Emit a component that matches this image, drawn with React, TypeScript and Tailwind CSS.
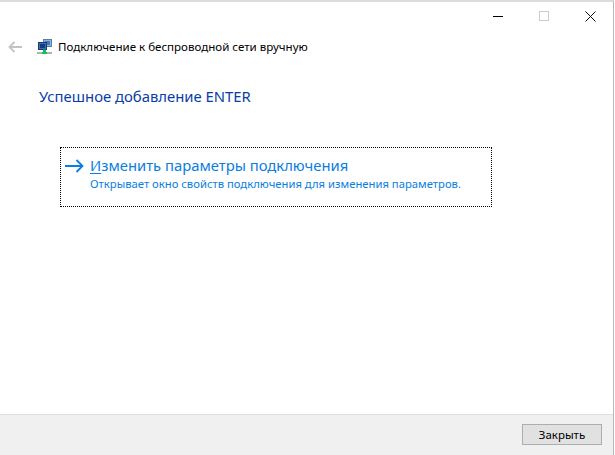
import React from 'react'

const segoe = "font-['Noto_Sans',sans-serif]"

const NetworkIcon: React.FC = () => (
    <svg width="16" height="16" viewBox="0 0 16 16" className="shrink-0">
        <rect x="6.5" y="0.5" width="8" height="7" fill="#8fb4dc" stroke="#5d7ba6" />
        <rect x="8" y="2" width="5" height="4" fill="#3f79c4" />
        <rect x="1.5" y="3.5" width="8" height="7" fill="#2f6fc4" stroke="#22385f" />
        <rect x="3" y="5" width="5" height="4" fill="#123a86" />
        <rect x="6" y="10.5" width="3" height="3" fill="#19b964" />
        <rect x="0" y="13" width="15" height="2" fill="#a8b8a8" />
        <rect x="5" y="13" width="5" height="2" fill="#19b964" />
    </svg>
)

const BackArrow: React.FC = () => (
    <svg width="14" height="12" viewBox="0 0 14 12" fill="none" stroke="#c4c4c4" strokeWidth="1.8" className="shrink-0">
        <path d="M14 6H1.5M6.5 1 1.5 6l5 5" />
    </svg>
)

const LinkArrow: React.FC = () => (
    <svg width="19" height="14" viewBox="0 0 19 14" fill="none" stroke="#0a7ee0" strokeWidth="1.8" className="shrink-0">
        <path d="M0 7H17.5M11.5 1l6 6-6 6" />
    </svg>
)

export default function App() {
    return (
        <div className={`flex h-[455px] w-[615px] flex-col overflow-hidden bg-white ${segoe}`}>
            <div className="mr-[1px] flex min-h-0 flex-1 flex-col border-t-2 border-r border-[#dcdcdc] border-r-[#b8b8b8]">
                <div className="flex h-[28px] items-center justify-end">
                    <div className="flex w-[46px] justify-center">
                        <div className="h-[1px] w-[10px] bg-black" />
                    </div>
                    <div className="flex w-[46px] justify-center">
                        <div className="h-[10px] w-[10px] border border-[#cccccc]" />
                    </div>
                    <div className="flex w-[46px] justify-center">
                        <svg width="11" height="11" viewBox="0 0 11 11" stroke="#111111" strokeWidth="1" fill="none">
                            <path d="M.5.5l10 10M10.5.5l-10 10" />
                        </svg>
                    </div>
                </div>

                <div className="mt-[9px] flex h-[16px] items-center pl-[8px]">
                    <BackArrow />
                    <div className="ml-[15px]">
                        <NetworkIcon />
                    </div>
                    <span className="ml-[5px] text-[11.55px] leading-none whitespace-nowrap text-black">
                        Подключение к беспроводной сети вручную
                    </span>
                </div>

                <div className="mt-[31px] pl-[39px] text-[14.85px] leading-[20px] text-[#0a3da6]">
                    Успешное добавление ENTER
                </div>

                <div className="mt-[41px] ml-[60px] flex h-[60px] w-[432px] border border-dotted border-black pt-[7px] pl-[4px]">
                    <div className="pt-[4px]">
                        <LinkArrow />
                    </div>
                    <div className="ml-[6px] text-[#0a7ee0]">
                        <div className="text-[14.8px] leading-[20px] whitespace-nowrap">
                            <span className="underline underline-offset-2">И</span>зменить параметры подключения
                        </div>
                        <div className="mt-[1px] text-[11.27px] leading-[16px] whitespace-nowrap">
                            Открывает окно свойств подключения для изменения параметров.
                        </div>
                    </div>
                </div>

                <div className="mt-auto flex h-[41px] items-center justify-end border-t border-[#dfdfdf] bg-[#f0f0f0] pr-[11px]">
                    <button className="mt-[-1px] h-[21px] w-[80px] border border-[#adadad] bg-[#e1e1e1] text-[11.5px] leading-none text-black">
                        Закрыть
                    </button>
                </div>
            </div>
        </div>
    )
}
